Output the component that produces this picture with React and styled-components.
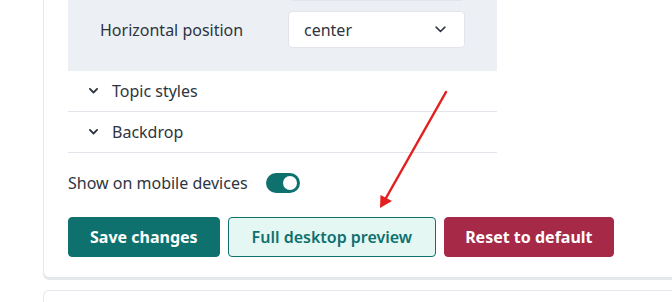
import React, { useState } from 'react';
import styled, { createGlobalStyle } from 'styled-components';

const GlobalStyle = createGlobalStyle`
  html, body {
    margin: 0;
    padding: 0;
    background: #fff;
    overflow: hidden;
  }
  body {
    font-family: 'Noto Sans', 'Open Sans', Arial, sans-serif;
    color: #2e3440;
  }
`;

const Page = styled.div`
  position: relative;
  margin-top: -53px;
  padding-left: 43px;
  width: 629px;
  height: 355px;
  overflow: hidden;
`;

const Card = styled.section`
  background: #fff;
  border: 1px solid #e3e6ed;
  border-right: none;
  border-radius: 6px 0 0 6px;
  box-shadow: 0 2px 0 #e6e8ec;
  padding: 0 24px 20px;
  margin-bottom: 12px;
`;

const Panel = styled.div`
  width: 429px;
  box-sizing: border-box;
  background: #ecf0f4;
  padding: 16px 32px 23px;
  display: flex;
  flex-direction: column;
  gap: 10px;
`;

const FieldRow = styled.div`
  display: grid;
  grid-template-columns: 188px 177px;
  align-items: center;
`;

const Label = styled.span`
  font-size: 16px;
`;

const Select = styled.div`
  height: 37px;
  box-sizing: border-box;
  background: #fff;
  border: 1px solid #e1e5eb;
  border-radius: 4px;
  display: flex;
  align-items: center;
  justify-content: space-between;
  padding: 0 18px 0 15px;
  font-size: 16px;
`;

const Section = styled.div`
  width: 429px;
  height: 41px;
  box-sizing: border-box;
  border-bottom: 1px solid #e2e6ec;
  display: flex;
  align-items: center;
  gap: 14px;
  padding-left: 21px;
  font-size: 16px;
`;

const ToggleRow = styled.label`
  display: flex;
  align-items: center;
  gap: 18px;
  margin-top: 20px;
  font-size: 16px;
  height: 20px;
`;

const Switch = styled.span`
  width: 34px;
  height: 20px;
  border-radius: 10px;
  background: ${p => (p.on ? '#0e716e' : '#c5cbd3')};
  display: flex;
  align-items: center;
  justify-content: ${p => (p.on ? 'flex-end' : 'flex-start')};
  padding: 0 3px;
  box-sizing: border-box;

  &::after {
    content: '';
    width: 14px;
    height: 14px;
    border-radius: 50%;
    background: #fff;
  }
`;

const Actions = styled.div`
  display: flex;
  gap: 8px;
  margin-top: 24px;
`;

const variants = {
  primary: { bg: '#0e716e', fg: '#fff', border: '#0e716e' },
  secondary: { bg: '#e5f7f3', fg: '#0e716e', border: '#0e716e' },
  danger: { bg: '#a62a47', fg: '#fff', border: '#a62a47' },
};

const Button = styled.button`
  height: 40px;
  padding: 0 ${p => p.px}px;
  border-radius: 4px;
  border: 1px solid ${p => variants[p.variant].border};
  background: ${p => variants[p.variant].bg};
  color: ${p => variants[p.variant].fg};
  font-family: 'Noto Sans', 'Open Sans', Arial, sans-serif;
  font-size: 16px;
  font-weight: ${p => (p.variant === 'secondary' ? 600 : 700)};
  cursor: pointer;
`;

const NextCard = styled.div`
  height: 40px;
  border: 1px solid #e3e6ed;
  border-right: none;
  border-radius: 6px 0 0 6px;
`;

const Arrow = styled.svg`
  position: absolute;
  left: 0;
  top: 53px;
  pointer-events: none;
`;

const Chevron = ({ size = 10, stroke = 2 }) => (
  <svg width={size} height={size * 0.6} viewBox="0 0 10 6" fill="none">
    <path d="M1 1l4 4 4-4" stroke="#2e3440" strokeWidth={stroke} strokeLinecap="round" strokeLinejoin="round" />
  </svg>
);

export default function App() {
  const [mobile, setMobile] = useState(true);
  return (
    <>
      <GlobalStyle />
      <Page>
        <Card>
          <Panel>
            <FieldRow>
              <Label />
              <Select />
            </FieldRow>
            <FieldRow>
              <Label>Horizontal position</Label>
              <Select>
                center
                <Chevron size={11} stroke={1.4} />
              </Select>
            </FieldRow>
          </Panel>
          <Section>
            <Chevron size={9} stroke={2} />
            Topic styles
          </Section>
          <Section>
            <Chevron size={9} stroke={2} />
            Backdrop
          </Section>
          <ToggleRow onClick={() => setMobile(!mobile)}>
            Show on mobile devices
            <Switch on={mobile ? 1 : 0} />
          </ToggleRow>
          <Actions>
            <Button variant="primary" px={21}>Save changes</Button>
            <Button variant="secondary" px={23}>Full desktop preview</Button>
            <Button variant="danger" px={20}>Reset to default</Button>
          </Actions>
        </Card>
        <NextCard />
        <Arrow width="672" height="302" viewBox="0 0 672 302">
          <line x1="446" y1="92" x2="386" y2="198" stroke="#e41f1f" strokeWidth="2.5" strokeLinecap="round" />
          <polygon points="380,208 380.5,195 392,201" fill="#e41f1f" />
        </Arrow>
      </Page>
    </>
  );
}
